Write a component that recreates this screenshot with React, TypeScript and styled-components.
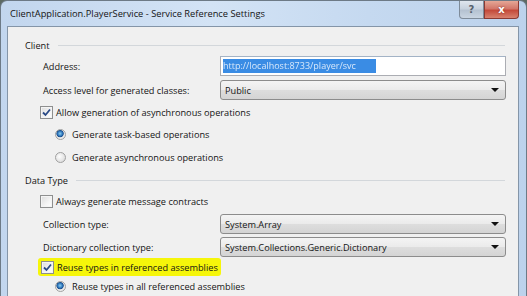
import styled, { createGlobalStyle } from "styled-components";

const GlobalStyle = createGlobalStyle`
  html, body {
    margin: 0;
    padding: 0;
    background: #5d6a63;
  }
  body {
    font-family: "Open Sans", "Noto Sans", sans-serif;
    font-size: 9.2px;
    color: #141414;
  }
`;

const Window = styled.div`
  width: 527px;
  height: 296px;
  overflow: hidden;
  display: flex;
  flex-direction: column;
  box-sizing: border-box;
  border: 1px solid #6d7a86;
  border-bottom: none;
  border-radius: 7px 7px 0 0;
  background: linear-gradient(90deg, #c2d6ee 0%, #d3e3f5 40%, #c5d9f0 70%, #bcd2ec 100%);
`;

const TitleBar = styled.div`
  height: 25px;
  flex: 0 0 25px;
  display: flex;
  align-items: flex-start;
  padding-left: 9px;
  padding-right: 7px;
`;

const Title = styled.div`
  flex: 1;
  line-height: 26px;
  font-size: 9.3px;
  white-space: nowrap;
`;

const CaptionButtons = styled.div`
  display: flex;
`;

const CaptionButton = styled.div<{ $close?: boolean }>`
  width: ${(p) => (p.$close ? 35 : 25)}px;
  height: 18px;
  box-sizing: border-box;
  border: 1px solid ${(p) => (p.$close ? "#8a3a33" : "#7e8b99")};
  border-top: none;
  border-radius: ${(p) => (p.$close ? "0 0 4px 0" : "0 0 0 4px")};
  background: ${(p) =>
    p.$close
      ? "linear-gradient(180deg, #e5a796 0%, #d2776a 45%, #c44a3a 55%, #d8826f 100%)"
      : "linear-gradient(180deg, #dfe6ee 0%, #c7d2de 45%, #b5c2d1 55%, #c9d5e2 100%)"};
  display: flex;
  align-items: center;
  justify-content: center;
  color: ${(p) => (p.$close ? "#fff" : "#56606c")};
  font-family: "DejaVu Sans", sans-serif;
  font-weight: bold;
  font-size: 10px;
  text-shadow: ${(p) => (p.$close ? "0 0 2px #7a2a20" : "none")};
`;

const Client = styled.div`
  flex: 1;
  margin: 0 7px 0 6px;
  border: 1px solid #8495a8;
  border-bottom: none;
  background: #f0f0f0;
  display: flex;
  flex-direction: column;
  padding: 8px 12px 0 17px;
`;

const GroupHeader = styled.div<{ $mt?: number }>`
  height: 20px;
  margin-top: ${(p) => p.$mt ?? 0}px;
  display: flex;
  align-items: center;
  gap: 8px;
  white-space: nowrap;
  &::after {
    content: "";
    flex: 1;
    height: 1px;
    background: #d3d7db;
    margin-right: 1px;
  }
`;

const FieldRow = styled.div<{ $mt?: number }>`
  display: grid;
  grid-template-columns: 177px 1fr;
  align-items: center;
  height: 20px;
  margin-top: ${(p) => p.$mt ?? 0}px;
  padding-left: 18px;
`;

const Label = styled.div`
  white-space: nowrap;
`;

const TextBox = styled.div`
  height: 20px;
  box-sizing: border-box;
  border: 1px solid #abadb3;
  border-top-color: #a3b3c6;
  background: #fff;
  display: flex;
  align-items: center;
  padding-left: 2px;
`;

const Selection = styled.span`
  width: 153px;
  height: 14px;
  background: #3a8ce4;
  color: #d8e8fa;
  font-size: 9px;
  line-height: 14px;
  overflow: hidden;
  white-space: nowrap;
  filter: blur(0.6px);
`;

const Combo = styled.div`
  height: 20px;
  box-sizing: border-box;
  border: 1px solid #8c8c8c;
  border-radius: 3px;
  background: linear-gradient(180deg, #f4f4f4 0%, #ebebeb 48%, #dddddd 52%, #d4d4d4 100%);
  display: flex;
  align-items: center;
  justify-content: space-between;
  padding: 0 6px 0 4px;
`;

const Arrow = styled.span`
  width: 0;
  height: 0;
  border-left: 4px solid transparent;
  border-right: 4px solid transparent;
  border-top: 4px solid #111;
`;

const CheckRow = styled.div<{ $mt?: number; $indent: number; $highlight?: boolean }>`
  display: flex;
  align-items: center;
  gap: 3px;
  height: 18px;
  margin-top: ${(p) => p.$mt ?? 0}px;
  margin-left: ${(p) => p.$indent}px;
  padding: 0 ${(p) => (p.$highlight ? 3 : 0)}px;
  align-self: flex-start;
  white-space: nowrap;
  background: ${(p) => (p.$highlight ? "#f6f60a" : "transparent")};
  border-radius: 3px;
`;

const CheckBox = styled.span`
  width: 13px;
  height: 13px;
  box-sizing: border-box;
  border: 1px solid #8e8f8f;
  background: linear-gradient(135deg, #dcdcdc 0%, #f4f4f4 60%, #fff 100%);
  box-shadow: inset 0 0 0 1px #f4f4f4;
  display: flex;
  align-items: center;
  justify-content: center;
`;

const Radio = styled.span<{ $checked?: boolean }>`
  width: 11px;
  height: 11px;
  box-sizing: border-box;
  border-radius: 50%;
  border: 1px solid #a0a0a0;
  background: ${(p) =>
    p.$checked
      ? "radial-gradient(circle at 45% 40%, #8ad0f3 0%, #2a6fb5 35%, #1c4f8a 45%, #e8e8e8 55%, #f8f8f8 100%)"
      : "radial-gradient(circle at 40% 40%, #fdfdfd 0%, #e0e0e0 70%, #cfcfcf 100%)"};
  margin-right: 3px;
`;

const Check = () => (
  <svg width="9" height="9" viewBox="0 0 9 9">
    <path d="M1 4.5 L3.5 7 L8 1.5" fill="none" stroke="#2a4a86" strokeWidth="1.8" />
  </svg>
);

export default function App() {
  return (
    <>
      <GlobalStyle />
      <Window>
        <TitleBar>
          <Title>ClientApplication.PlayerService - Service Reference Settings</Title>
          <CaptionButtons>
            <CaptionButton>?</CaptionButton>
            <CaptionButton $close>x</CaptionButton>
          </CaptionButtons>
        </TitleBar>
        <Client>
          <GroupHeader>Client</GroupHeader>
          <FieldRow $mt={1}>
            <Label>Address:</Label>
            <TextBox>
              <Selection>http://localhost:8733/player/svc</Selection>
            </TextBox>
          </FieldRow>
          <FieldRow $mt={4}>
            <Label>Access level for generated classes:</Label>
            <Combo>
              <span>Public</span>
              <Arrow />
            </Combo>
          </FieldRow>
          <CheckRow $mt={3} $indent={15}>
            <CheckBox>
              <Check />
            </CheckBox>
            Allow generation of asynchronous operations
          </CheckRow>
          <CheckRow $mt={4} $indent={30}>
            <Radio $checked />
            Generate task-based operations
          </CheckRow>
          <CheckRow $mt={5} $indent={30}>
            <Radio />
            Generate asynchronous operations
          </CheckRow>
          <GroupHeader $mt={4}>Data Type</GroupHeader>
          <CheckRow $mt={2} $indent={15}>
            <CheckBox />
            Always generate message contracts
          </CheckRow>
          <FieldRow $mt={4}>
            <Label>Collection type:</Label>
            <Combo>
              <span>System.Array</span>
              <Arrow />
            </Combo>
          </FieldRow>
          <FieldRow $mt={3}>
            <Label>Dictionary collection type:</Label>
            <Combo>
              <span>System.Collections.Generic.Dictionary</span>
              <Arrow />
            </Combo>
          </FieldRow>
          <CheckRow $mt={1} $indent={13} $highlight>
            <CheckBox>
              <Check />
            </CheckBox>
            Reuse types in referenced assemblies
          </CheckRow>
          <CheckRow $mt={1} $indent={30}>
            <Radio $checked />
            Reuse types in all referenced assemblies
          </CheckRow>
        </Client>
      </Window>
    </>
  );
}
